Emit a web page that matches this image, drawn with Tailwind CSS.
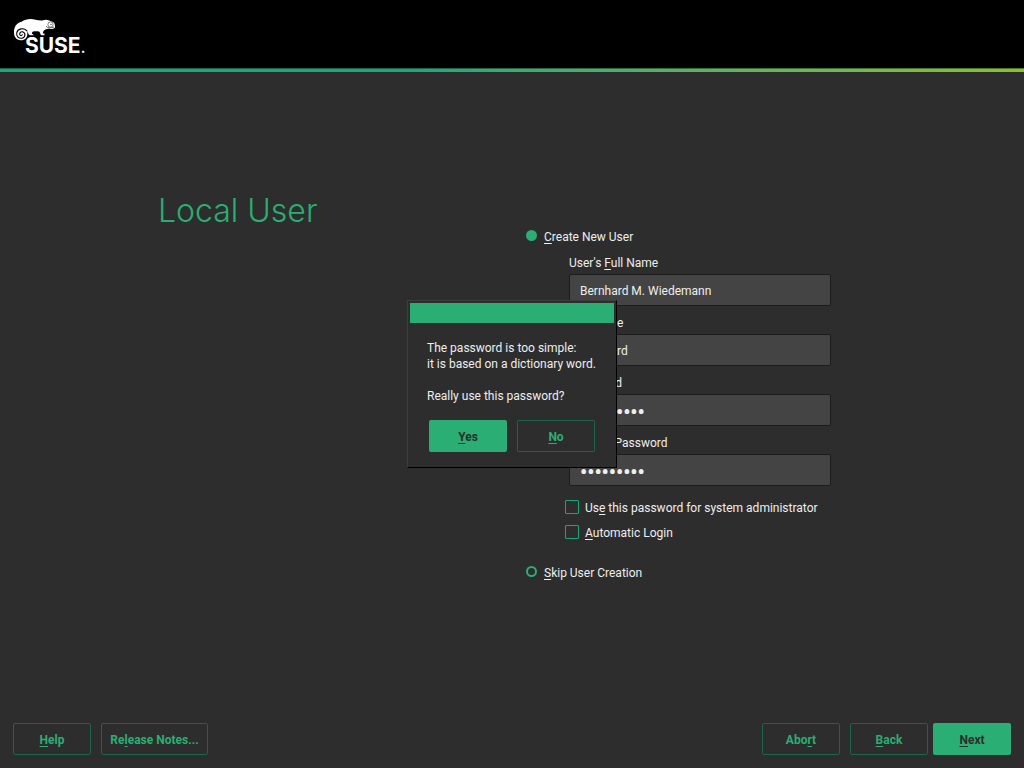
<!DOCTYPE html>
<html lang="en">
<head>
<meta charset="utf-8">
<meta name="viewport" content="width=device-width, initial-scale=1">
<title>Local User</title>
<script src="https://cdn.jsdelivr.net/npm/@tailwindcss/browser@4"></script>
</head>
<body class="flex min-h-screen flex-col bg-[#2d2d2d] font-['Roboto',sans-serif] text-xs text-[#eeeeee]">
<header>
  <div class="h-[68px] bg-black">
    <svg class="h-[68px] w-[100px]" viewBox="0 0 100 68" role="img" aria-label="SUSE">
      <path fill="#fff" d="M14 33C13.800 26 17 23 21.500 21.800C24.500 19.800 27 19 30.500 19C34 19 37 20.500 41 20.600C43 20.600 44 19.600 46 19.700C49.500 20.200 52 21.300 54 22.700C54.800 24 55.200 25.600 55 27.400C54 28.600 52.500 29 50.500 29C47.500 28.500 44.500 29.300 43.300 31.500L42.800 33.500H44.500V35.300H41C40.300 33.600 40.200 32.300 39 31.400C37 31.200 34.500 31 32.500 31.800L31.800 33.600L34 35.300H30C28.500 35 28.200 32.500 27 31.500C28.500 37 25 40.500 20.500 40.300C16.500 40 14.100 37 14 33Z"/>
      <path fill="none" stroke="#000" stroke-width="1.100" stroke-linecap="round" d="M27 30.800C24 27.800 18 28 16.800 32.500C16 36 18.500 38.500 21.700 38.200C25.400 37.700 26 33.200 23 31.900C20.500 31.200 19 33.300 20 35C20.700 35.900 22 35.700 22.300 34.700"/>
      <circle cx="50.500" cy="24.500" r="2.600" fill="none" stroke="#000" stroke-width=".5"/>
      <circle cx="51" cy="24.300" r=".6" fill="#000"/>
      <path fill="none" stroke="#000" stroke-width=".6" d="M46 26.300C48 28.300 51 28.200 54 27"/>
      <text x="25" y="53" fill="#fff" font-family="Inter, sans-serif" font-size="21" font-weight="700">SUSE<tspan font-size="14">.</tspan></text>
    </svg>
  </div>
  <div class="h-1 border-t border-black/40 bg-linear-to-r from-[#21a57b] from-40% to-[#86c132] bg-origin-border"></div>
</header>

<main class="grid flex-1 grid-cols-2 pt-[120px]">
  <h1 class="pt-px pl-[158px] font-['Inter',sans-serif] text-[32px] leading-9 font-light text-[#2aae73]">Local User</h1>
  <form class="mt-8 mr-auto w-[319px] pl-3.5">
    <div class="flex h-[22px] items-center gap-[7px]">
      <input type="radio" name="mode" id="create" checked class="size-[11px] appearance-none rounded-full border-2 border-[#2aae73] checked:bg-[#2aae73]">
      <label for="create" class="pt-1"><span class="underline underline-offset-2">C</span>reate New User</label>
    </div>
    <div class="mt-1 flex flex-col gap-1 pl-[43px]">
      <div>
        <label for="full" class="block h-6 pt-px leading-6">User's <span class="underline underline-offset-2">F</span>ull Name</label>
        <input id="full" type="text" value="Bernhard M. Wiedemann" class="block h-8 w-full rounded-xs border border-[#1c1c1c] bg-[#444444] px-2.5 pt-0.5">
      </div>
      <div>
        <label for="user" class="block h-6 pt-px leading-6"><span class="underline underline-offset-2">U</span>sername</label>
        <input id="user" type="text" value="bernhard" class="block h-8 w-full rounded-xs border border-[#1c1c1c] bg-[#444444] px-2.5 pt-0.5">
      </div>
      <div>
        <label for="pass" class="block h-6 pt-px leading-6"><span class="underline underline-offset-2">P</span>assword</label>
        <input id="pass" type="password" value="blueberry" class="block h-8 w-full rounded-xs border border-[#1c1c1c] bg-[#444444] px-2.5 pt-1 text-xl font-bold">
      </div>
      <div>
        <label for="confirm" class="block h-6 pt-px leading-6">C<span class="underline underline-offset-2">o</span>nfirm Password</label>
        <input id="confirm" type="password" value="blueberry" class="block h-8 w-full rounded-xs border border-[#1c1c1c] bg-[#444444] px-2.5 pt-1 text-xl font-bold">
      </div>
    </div>
    <div class="mt-2 flex flex-col pl-[39px]">
      <div class="flex h-[25px] items-center gap-1.5">
        <input type="checkbox" id="admin" class="size-3.5 appearance-none rounded-[1px] border border-[#17a77b] checked:bg-[#2aae73]">
        <label for="admin" class="pt-0.5">Us<span class="underline underline-offset-2">e</span> this password for system administrator</label>
      </div>
      <div class="flex h-[25px] items-center gap-1.5">
        <input type="checkbox" id="auto" class="size-3.5 appearance-none rounded-[1px] border border-[#17a77b] checked:bg-[#2aae73]">
        <label for="auto" class="pt-0.5"><span class="underline underline-offset-2">A</span>utomatic Login</label>
      </div>
    </div>
    <div class="mt-4 flex h-[22px] items-center gap-[7px]">
      <input type="radio" name="mode" id="skip" class="size-[11px] appearance-none rounded-full border-2 border-[#2aae73] checked:bg-[#2aae73]">
      <label for="skip" class="pt-1"><span class="underline underline-offset-2">S</span>kip User Creation</label>
    </div>
  </form>
</main>

<footer class="flex items-center px-[13px] pb-[13px] font-bold text-[#2aae73]">
  <button type="button" class="h-8 w-[78px] rounded-xs border border-[#1b6548] pt-0.5"><span class="underline underline-offset-2">H</span>elp</button>
  <button type="button" class="ml-2.5 h-8 w-[107px] rounded-xs border border-[#1b6548] pt-0.5">Re<span class="underline underline-offset-2">l</span>ease Notes...</button>
  <button type="button" class="ml-auto h-8 w-[78px] rounded-xs border border-[#1b6548] pt-0.5">Abo<span class="underline underline-offset-2">r</span>t</button>
  <button type="button" class="ml-2.5 h-8 w-[78px] rounded-xs border border-[#1b6548] pt-0.5"><span class="underline underline-offset-2">B</span>ack</button>
  <button type="button" class="ml-[5px] h-8 w-[78px] rounded-xs bg-[#2aae73] pt-0.5 text-[#2d2d2d]"><span class="underline underline-offset-2">N</span>ext</button>
</footer>

<div class="fixed inset-0 grid place-items-center">
  <div role="dialog" aria-modal="true" aria-describedby="message" class="w-[210px] border border-t-[#3d3d3d] border-r-black border-b-black border-l-[#3d3d3d] bg-[#2d2d2d] p-0.5 pb-[15px]">
    <div class="h-5 bg-[#2aae73]"></div>
    <p id="message" class="pt-[17px] pl-[17px] leading-4 whitespace-nowrap">The password is too simple:<br>it is based on a dictionary word.<br><br>Really use this password?</p>
    <div class="mt-4 flex gap-2.5 pl-[19px] font-bold">
      <button type="button" class="h-8 w-[78px] rounded-xs bg-[#2aae73] pt-0.5 text-[#2d2d2d]"><span class="underline underline-offset-2">Y</span>es</button>
      <button type="button" class="h-8 w-[78px] rounded-xs border border-[#1b6548] pt-0.5 text-[#2aae73]"><span class="underline underline-offset-2">N</span>o</button>
    </div>
  </div>
</div>
</body>
</html>
